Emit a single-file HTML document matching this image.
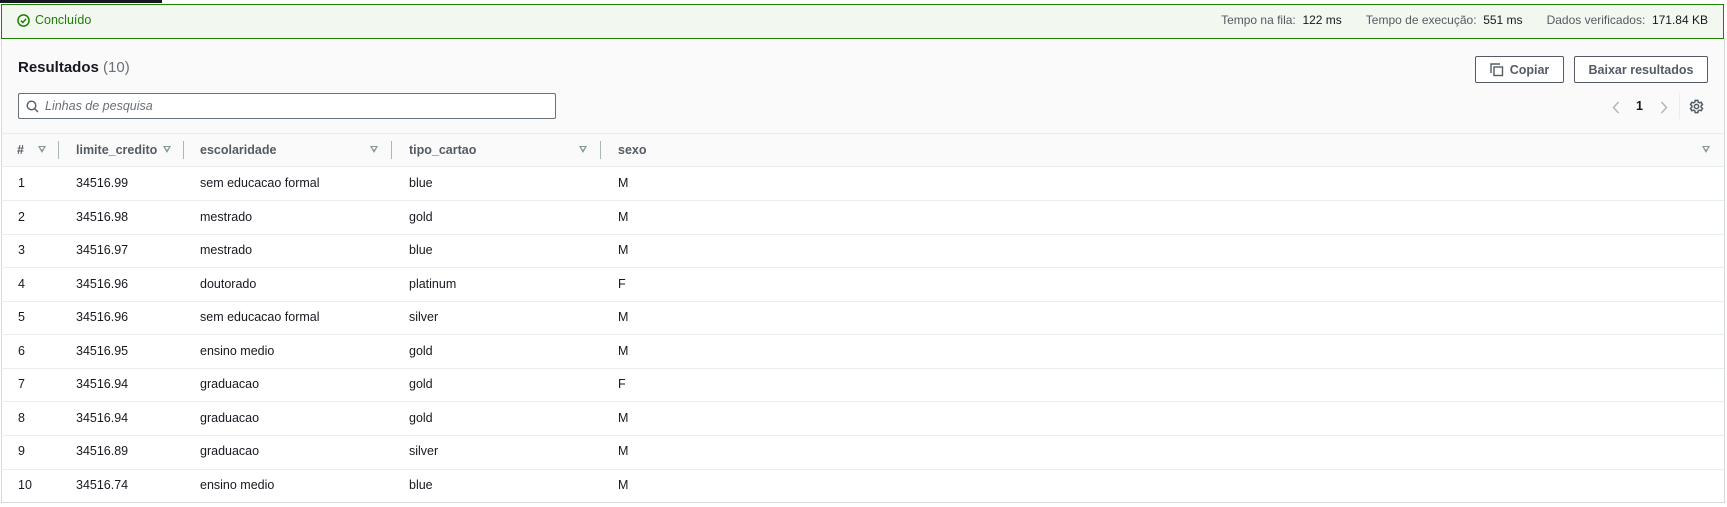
<!DOCTYPE html>
<html><head><meta charset="utf-8"><style>
*{box-sizing:border-box;margin:0;padding:0}
body{width:1727px;height:507px;background:#fff;font-family:"Liberation Sans",sans-serif;font-size:12.5px;color:#16191f;position:relative;overflow:hidden}
.a{position:absolute}
.tab{left:0;top:0;width:162px;height:3px;background:#16191f}
.banner{left:1px;top:4px;width:1723px;height:35px;background:#f2f8f0;border:1px solid #1d8102}
.panel{left:1px;top:39px;width:1724px;height:464px;border:1px solid #d5dbdb;border-top:none;background:#fafafa}
.txt{white-space:nowrap}
.btn{border:1px solid #545b64;border-radius:2px;background:#fff;font-weight:bold;color:#545b64;font-size:12.5px;display:flex;align-items:center;justify-content:center}
.hl{left:1px;width:1723px;height:1px;background:#eaeded}
.row{left:2px;width:1722px;height:335px;background:#fff}
.hd{font-weight:bold;color:#545b64}
.f{width:0;height:0;border-left:4px solid transparent;border-right:4px solid transparent;border-top:7px solid #879596}
.f::after{content:"";position:absolute;left:-2px;top:-6px;border-left:2px solid transparent;border-right:2px solid transparent;border-top:3.5px solid #fff}
.dv{width:1px;height:18px;background:#aab7b8}
.stats{right:19px;top:13px;display:flex;gap:24px;color:#545b64;font-size:12px}
.stats span{color:#16191f}
</style></head><body>
<div class="a tab"></div>
<div class="a banner"></div>
<svg class="a" style="left:17px;top:14px" width="13" height="13" viewBox="0 0 14 14"><circle cx="7" cy="7" r="6" fill="none" stroke="#1d8102" stroke-width="1.6"/><path d="M4.2 7.2l2 2 3.6-4" fill="none" stroke="#1d8102" stroke-width="1.6"/></svg>
<div class="a txt" style="left:35px;top:13px;color:#1d8102">Concluído</div>
<div class="a txt stats"><div>Tempo na fila:&nbsp; <span>122 ms</span></div><div>Tempo de execução:&nbsp; <span>551 ms</span></div><div>Dados verificados:&nbsp; <span>171.84 KB</span></div></div>
<div class="a panel"></div>
<div class="a txt" style="left:18px;top:59px;font-size:15px;font-weight:bold">Resultados <span style="font-weight:normal;color:#687078">(10)</span></div>
<div class="a btn" style="left:1475px;top:56px;width:89px;height:27px"><svg width="14" height="14" viewBox="0 0 14 14" style="margin-right:6px"><path d="M1 10V1h9" fill="none" stroke="#545b64" stroke-width="1.4"/><rect x="4" y="4" width="8.5" height="8.5" fill="none" stroke="#545b64" stroke-width="1.4"/></svg>Copiar</div>
<div class="a btn" style="left:1574px;top:56px;width:134px;height:27px">Baixar resultados</div>
<div class="a" style="left:18px;top:93px;width:538px;height:26px;border:1px solid #687078;border-radius:2px;background:#fff"></div>
<svg class="a" style="left:26px;top:100px" width="13" height="13" viewBox="0 0 13 13"><circle cx="5.5" cy="5.5" r="4.3" fill="none" stroke="#545b64" stroke-width="1.4"/><path d="M8.6 8.6L12 12" stroke="#545b64" stroke-width="1.4"/></svg>
<div class="a txt" style="left:45px;top:99px;font-style:italic;color:#687078">Linhas de pesquisa</div>
<svg class="a" style="left:1612px;top:101px" width="8" height="13" viewBox="0 0 8 13"><path d="M6.5 1L1.5 6.5l5 5.5" fill="none" stroke="#aab7b8" stroke-width="1.4"/></svg>
<div class="a txt" style="left:1636px;top:99px;font-weight:bold">1</div>
<svg class="a" style="left:1660px;top:101px" width="8" height="13" viewBox="0 0 8 13"><path d="M1.5 1l5 5.5-5 5.5" fill="none" stroke="#aab7b8" stroke-width="1.4"/></svg>
<div class="a" style="left:1679px;top:93px;width:1px;height:26px;background:#eaeded"></div>
<svg class="a" style="left:1689px;top:99px" width="15" height="15" viewBox="0 0 16 16"><g fill="none" stroke="#545b64" stroke-width="1.6"><circle cx="8" cy="8" r="2.3"/><path d="M6.6 1.5h2.8l.4 1.8 1.4.8 1.8-.6 1.4 2.4-1.4 1.2v1.8l1.4 1.2-1.4 2.4-1.8-.6-1.4.8-.4 1.8H6.6l-.4-1.8-1.4-.8-1.8.6-1.4-2.4 1.4-1.2V7.1L1.6 5.9 3 3.5l1.8.6 1.4-.8z"/></g></svg>
<div class="a hl" style="top:133px"></div>
<div class="a" style="left:2px;top:134px;width:1722px;height:32px;background:#fafafa"></div>
<div class="a hl" style="top:166px"></div>
<div class="a txt hd" style="left:17px;top:143px">#</div><div class="a f" style="left:38px;top:146px"></div><div class="a dv" style="left:58px;top:141px"></div>
<div class="a txt hd" style="left:76px;top:143px">limite_credito</div><div class="a f" style="left:163px;top:146px"></div><div class="a dv" style="left:183px;top:141px"></div>
<div class="a txt hd" style="left:200px;top:143px">escolaridade</div><div class="a f" style="left:370px;top:146px"></div><div class="a dv" style="left:391px;top:141px"></div>
<div class="a txt hd" style="left:409px;top:143px">tipo_cartao</div><div class="a f" style="left:579px;top:146px"></div><div class="a dv" style="left:600px;top:141px"></div>
<div class="a txt hd" style="left:618px;top:143px">sexo</div><div class="a f" style="left:1702px;top:146px"></div>
<div class="a row" style="top:167px"></div>
<div class="a txt" style="left:18px;top:176px">1</div><div class="a txt" style="left:76px;top:176px">34516.99</div><div class="a txt" style="left:200px;top:176px">sem educacao formal</div><div class="a txt" style="left:409px;top:176px">blue</div><div class="a txt" style="left:618px;top:176px">M</div>
<div class="a hl" style="top:200px"></div>
<div class="a txt" style="left:18px;top:210px">2</div><div class="a txt" style="left:76px;top:210px">34516.98</div><div class="a txt" style="left:200px;top:210px">mestrado</div><div class="a txt" style="left:409px;top:210px">gold</div><div class="a txt" style="left:618px;top:210px">M</div>
<div class="a hl" style="top:234px"></div>
<div class="a txt" style="left:18px;top:243px">3</div><div class="a txt" style="left:76px;top:243px">34516.97</div><div class="a txt" style="left:200px;top:243px">mestrado</div><div class="a txt" style="left:409px;top:243px">blue</div><div class="a txt" style="left:618px;top:243px">M</div>
<div class="a hl" style="top:267px"></div>
<div class="a txt" style="left:18px;top:277px">4</div><div class="a txt" style="left:76px;top:277px">34516.96</div><div class="a txt" style="left:200px;top:277px">doutorado</div><div class="a txt" style="left:409px;top:277px">platinum</div><div class="a txt" style="left:618px;top:277px">F</div>
<div class="a hl" style="top:301px"></div>
<div class="a txt" style="left:18px;top:310px">5</div><div class="a txt" style="left:76px;top:310px">34516.96</div><div class="a txt" style="left:200px;top:310px">sem educacao formal</div><div class="a txt" style="left:409px;top:310px">silver</div><div class="a txt" style="left:618px;top:310px">M</div>
<div class="a hl" style="top:334px"></div>
<div class="a txt" style="left:18px;top:344px">6</div><div class="a txt" style="left:76px;top:344px">34516.95</div><div class="a txt" style="left:200px;top:344px">ensino medio</div><div class="a txt" style="left:409px;top:344px">gold</div><div class="a txt" style="left:618px;top:344px">M</div>
<div class="a hl" style="top:368px"></div>
<div class="a txt" style="left:18px;top:377px">7</div><div class="a txt" style="left:76px;top:377px">34516.94</div><div class="a txt" style="left:200px;top:377px">graduacao</div><div class="a txt" style="left:409px;top:377px">gold</div><div class="a txt" style="left:618px;top:377px">F</div>
<div class="a hl" style="top:401px"></div>
<div class="a txt" style="left:18px;top:411px">8</div><div class="a txt" style="left:76px;top:411px">34516.94</div><div class="a txt" style="left:200px;top:411px">graduacao</div><div class="a txt" style="left:409px;top:411px">gold</div><div class="a txt" style="left:618px;top:411px">M</div>
<div class="a hl" style="top:435px"></div>
<div class="a txt" style="left:18px;top:444px">9</div><div class="a txt" style="left:76px;top:444px">34516.89</div><div class="a txt" style="left:200px;top:444px">graduacao</div><div class="a txt" style="left:409px;top:444px">silver</div><div class="a txt" style="left:618px;top:444px">M</div>
<div class="a hl" style="top:469px"></div>
<div class="a txt" style="left:18px;top:478px">10</div><div class="a txt" style="left:76px;top:478px">34516.74</div><div class="a txt" style="left:200px;top:478px">ensino medio</div><div class="a txt" style="left:409px;top:478px">blue</div><div class="a txt" style="left:618px;top:478px">M</div>
</body></html>
